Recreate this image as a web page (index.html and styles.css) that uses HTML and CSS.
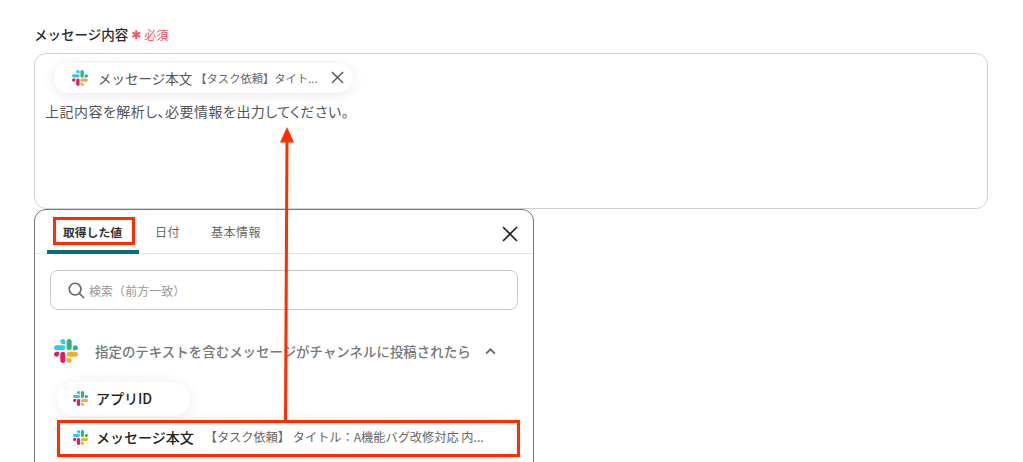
FILE: index.html
```html
<!DOCTYPE html>
<html lang="ja">
<head>
<meta charset="utf-8">
<title>メッセージ内容</title>
<link rel="stylesheet" href="styles.css">
</head>
<body>
<svg class="defs" width="0" height="0" aria-hidden="true">
  <symbol id="slack" viewBox="0 0 122.8 122.8">
    <path d="M25.8 77.6c0 7.1-5.8 12.9-12.9 12.9S0 84.7 0 77.6s5.8-12.9 12.9-12.9h12.9v12.9zm6.5 0c0-7.1 5.8-12.9 12.9-12.9s12.9 5.8 12.9 12.9v32.3c0 7.1-5.8 12.9-12.9 12.9s-12.9-5.8-12.9-12.9V77.6z" fill="#e01e5a"/>
    <path d="M45.2 25.8c-7.1 0-12.9-5.8-12.9-12.9S38.1 0 45.2 0s12.9 5.8 12.9 12.9v12.9H45.2zm0 6.5c7.1 0 12.9 5.8 12.9 12.9s-5.8 12.9-12.9 12.9H12.9C5.8 58.1 0 52.3 0 45.2s5.8-12.9 12.9-12.9h32.3z" fill="#36c5f0"/>
    <path d="M97 45.2c0-7.1 5.8-12.9 12.9-12.9s12.9 5.8 12.9 12.9-5.8 12.9-12.9 12.9H97V45.2zm-6.5 0c0 7.1-5.8 12.9-12.9 12.9s-12.9-5.8-12.9-12.9V12.9C64.7 5.8 70.5 0 77.6 0s12.9 5.8 12.9 12.9v32.3z" fill="#2eb67d"/>
    <path d="M77.6 97c7.1 0 12.9 5.8 12.9 12.9s-5.8 12.9-12.9 12.9-12.9-5.8-12.9-12.9V97h12.9zm0-6.5c-7.1 0-12.9-5.8-12.9-12.9s5.8-12.9 12.9-12.9h32.3c7.1 0 12.9 5.8 12.9 12.9s-5.8 12.9-12.9 12.9H77.6z" fill="#ecb22e"/>
  </symbol>
</svg>
<main class="page">
  <div class="label-row">
    <span class="label">メッセージ内容</span>
    <span class="req-star">✱</span>
    <span class="req">必須</span>
  </div>
  <div class="editor">
    <div class="chip">
      <svg class="icon-chip"><use href="#slack"/></svg>
      <span class="chip-name">メッセージ本文</span>
      <span class="chip-value">【タスク依頼】タイト...</span>
      <svg class="chip-x" viewBox="0 0 14 14"><path d="M1 1l12 12M13 1L1 13"/></svg>
    </div>
    <p class="editor-text">上記内容を解析し、必要情報を出力してください。</p>
  </div>
  <section class="panel">
    <div class="tabs">
      <div class="tab tab-active">取得した値</div>
      <div class="tab">日付</div>
      <div class="tab">基本情報</div>
      <svg class="panel-x" viewBox="0 0 16 16"><path d="M1 1l14 14M15 1L1 15"/></svg>
    </div>
    <div class="search">
      <svg class="search-icon" viewBox="0 0 18 18"><circle cx="7.5" cy="7.5" r="6.2"/><path d="M12 12l5 5"/></svg>
      <span class="search-text">検索（前方一致）</span>
    </div>
    <div class="group-head">
      <svg class="icon-lg"><use href="#slack"/></svg>
      <span class="group-title">指定のテキストを含むメッセージがチャンネルに投稿されたら</span>
      <svg class="chevron" viewBox="0 0 12 8"><path d="M1 6.5l5-5 5 5"/></svg>
    </div>
    <div class="items">
      <div class="item item-short">
        <svg class="icon-sm"><use href="#slack"/></svg>
        <span class="item-name">アプリID</span>
      </div>
      <div class="item">
        <svg class="icon-sm"><use href="#slack"/></svg>
        <span class="item-name">メッセージ本文</span>
        <span class="item-value">【タスク依頼】 タイトル：A機能バグ改修対応 内...</span>
      </div>
      <div class="item"></div>
    </div>
  </section>
  <div class="mark mark-tab"></div>
  <div class="mark mark-item"></div>
  <svg class="arrow" viewBox="0 0 1023 462">
    <path class="arrow-line" d="M285.5 421L287 140"/>
    <path class="arrow-head" d="M287 127l7 15.500h-14z"/>
  </svg>
</main>
</body>
</html>
```
FILE: styles.css
```css
* { box-sizing: border-box; }
html, body { margin: 0; height: 462px; overflow: hidden; background: #fff; }
body { font-family: "Noto Sans CJK JP", "Noto Sans", sans-serif; color: #333; }
.defs { position: absolute; }
.page { position: relative; height: 462px; overflow: hidden; padding: 23px 35px 0 34px; }

.label-row { display: flex; align-items: center; height: 22px; margin-bottom: 8px; }
.label { font-size: 13.500px; font-weight: 500; color: #2b2b2b; }
.req-star { color: #ff4d5e; font-size: 12px; line-height: 22px; margin-left: 3px; width: 13px; font-family: "DejaVu Sans", sans-serif; padding-top: 2px; }
.req { color: #ff4d5e; font-size: 12px; margin-left: 0; }

.editor { height: 156px; border: 1px solid #cdd3da; border-radius: 12px; padding: 9px 10px 0; }
.chip { display: flex; align-items: center; width: 299px; height: 30px; margin-left: 9px; padding: 0 0 1px 18px; border-radius: 15px; background: #fff; box-shadow: 0 2px 14px rgba(0, 0, 0, .09); }
.icon-chip { width: 16px; height: 16px; flex: none; }
.chip-name { font-size: 13.500px; color: #555; margin-left: 10px; }
.chip-value { font-size: 11.300px; color: #666; margin-left: 3px; white-space: nowrap; }
.chip-x { width: 13px; height: 13px; margin-left: auto; margin-right: 9px; fill: none; stroke: #555; stroke-width: 1.500; }
.editor-text { margin: 8px 0 0; font-size: 14px; line-height: 20px; color: #555; white-space: nowrap; font-feature-settings: "palt"; letter-spacing: .48px; }

.panel { width: 500px; height: 300px; margin-top: 0; border: 1px solid #777; border-radius: 12px; padding: 0 15px; background: #fff; }
.tabs { display: flex; position: relative; height: 44px; margin: 0 -15px; padding-left: 12px; border-bottom: 1px solid #e4e4e4; }
.tab { height: 44px; padding: 13px 16px 0; font-size: 12px; line-height: 18px; letter-spacing: .5px; color: #666; white-space: nowrap; }
.tab:nth-child(3) { margin-left: -1px; }
.tab-active { width: 92px; font-size: 11.800px; font-weight: 700; letter-spacing: 0; color: #333; border-bottom: 4px solid #0b6b80; border-radius: 4px 4px 0 0; }
.panel-x { position: absolute; right: 15px; top: 16px; width: 16px; height: 16px; fill: none; stroke: #222; stroke-width: 1.700; }

.search { display: flex; align-items: center; height: 40px; margin-top: 16px; padding-left: 17px; border: 1px solid #c8c8c8; border-radius: 8px; }
.search-icon { width: 17px; height: 17px; fill: none; stroke: #666; stroke-width: 1.700; }
.search-text { margin-left: 4px; font-size: 12px; color: #999; letter-spacing: .05px; }

.group-head { display: flex; align-items: center; height: 24px; margin-top: 29px; padding-left: 4px; }
.icon-lg { width: 24px; height: 24px; flex: none; }
.icon-sm { width: 15px; height: 15px; flex: none; }
.group-title { margin-left: 17px; font-size: 13.460px; font-weight: 500; color: #777; white-space: nowrap; }
.chevron { width: 11px; height: 7px; margin-left: 14px; fill: none; stroke: #666; stroke-width: 2; }

.items { display: flex; flex-direction: column; gap: 5px; margin-top: 19px; margin-left: 7px; }
.item { display: flex; align-items: center; flex: none; width: 459px; height: 34px; padding: 0 0 2px 16px; border-radius: 17px; background: #fff; box-shadow: 0 1px 14px rgba(0, 0, 0, .08); }
.item-short { width: 133px; }
.item-name { margin-left: 8px; font-size: 14px; font-weight: 500; color: #222; white-space: nowrap; }
.item-value { margin-left: 11px; font-size: 12.200px; color: #666; white-space: nowrap; }

.mark { position: absolute; border: 3px solid #ff2d00; }
.mark-tab { left: 53px; top: 217px; width: 82px; height: 28px; }
.mark-item { left: 57px; top: 420px; width: 463px; height: 37px; }
.arrow { position: absolute; left: 0; top: 0; width: 1023px; height: 462px; pointer-events: none; }
.arrow-line { fill: none; stroke: #ff2d00; stroke-width: 3; }
.arrow-head { fill: #ff2d00; }
```
